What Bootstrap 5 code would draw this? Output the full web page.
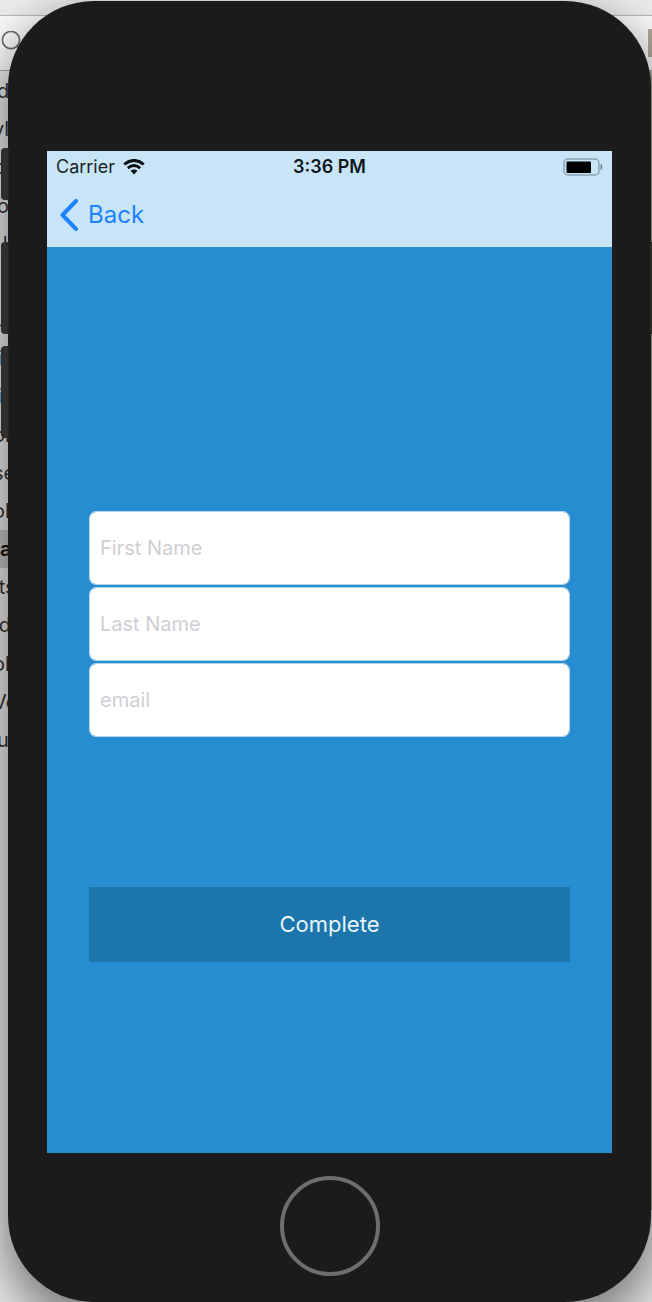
<!DOCTYPE html>
<html lang="en">
<head>
<meta charset="utf-8">
<meta name="viewport" content="width=device-width, initial-scale=1">
<title>Sign up</title>
<link rel="stylesheet" href="https://cdn.jsdelivr.net/npm/bootstrap@5.3.0/dist/css/bootstrap.min.css">
<style>
  body { font-family: Inter, "Liberation Sans", sans-serif; background: #ebebeb; color: #1b1b1b; }
  .stage { min-height: 100vh; padding: 1px 1px 0 8px; }

  /* Desktop window behind the device */
  .desktop { z-index: 0; }
  .tabstrip { height: 16px; background: #ececec; border-bottom: 1px solid #b8b8b8; }
  .searchbar { height: 55px; background: #fafafa; border-bottom: 1px solid #a8a8a8; }
  .thumb { width: 4px; height: 28px; background: #b0a898; }
  .side-list { height: 688px; padding-top: 1px; font-size: 20px; line-height: 1; color: #333; }
  .side-list li { margin-left: -3px; }
  .side-list .scrolled { margin-left: -7px; }
  .side-list .picked { margin-left: 0; background: #c4c4c4; font-weight: 600; color: #111; }
  .rail { top: 71px; bottom: 92px; width: 2px; background: #a5a39c; }

  /* Device body */
  .device { z-index: 1; min-height: calc(100vh - 1px); padding: 150px 39px 26px; border-radius: 86px; background: #1b1b1b; box-shadow: 0 20px 50px 4px rgba(0, 0, 0, .5); }
  .side-key { width: 9px; left: -7px; border-radius: 4px 0 0 4px; background: linear-gradient(90deg, #2e2e2e 70%, #1b1b1b); }
  .key-mute { top: 147px; height: 52px; }
  .key-up { top: 241px; height: 92px; }
  .key-down { top: 345px; height: 92px; }
  .key-power { top: 241px; height: 92px; right: -1px; width: 2px; background: #2b2a26; }

  .app-screen { background: #258dd0; }
  .app-top { height: 96px; background: #c8e5f7; }
  .status-row { height: 31px; padding: 0 9px; font-size: 18px; line-height: 31px; color: #1b2329; }
  .status-row .clock { font-weight: 600; color: #10161a; }
  .back-link { padding: 14px 12px 0; gap: 9px; font-size: 24px; line-height: 38px; color: #1e82ff; }
  .entry-form { padding: 264px 42px 191px; }
  .entry-fields { gap: 2px; margin-bottom: 150px; }
  .entry-fields .form-control { height: 74px; padding: 0 10px; border: 1px solid #b5d6ec; border-radius: 7px; font-size: 20px; color: #222; }
  .entry-fields .form-control::placeholder { color: #cfcfd3; opacity: 1; }
  .btn-complete { height: 75px; border-radius: 0; background: #1c75ab; color: #e8f3fa; font-size: 22px; }
  .btn-complete:hover { background: #19699a; color: #fff; }
  .home-key { width: 100px; height: 100px; margin-top: 23px; border: 4px solid #6e6e6e; border-radius: 50%; background: transparent; }
</style>
</head>
<body>
<div class="stage position-relative overflow-hidden">

  <div class="desktop position-absolute top-0 start-0 w-100 h-100" aria-hidden="true">
    <div class="tabstrip"></div>
    <div class="searchbar d-flex justify-content-between align-items-center">
      <svg width="24" height="24" viewBox="0 0 24 24" fill="none" stroke="#6b6b6b" stroke-width="1.7"><circle cx="11" cy="9" r="8.6"/><path d="M17 15l6 7"/></svg>
      <span class="thumb"></span>
    </div>
    <ul class="side-list list-unstyled d-flex flex-column mb-0">
      <li class="d-flex flex-fill align-items-center">d</li>
      <li class="scrolled d-flex flex-fill align-items-center">vl</li>
      <li class="scrolled d-flex flex-fill align-items-center">p</li>
      <li class="d-flex flex-fill align-items-center">o</li>
      <li class="d-flex flex-fill align-items-center">&nbsp;l</li>
      <li class="d-flex flex-fill align-items-center">&nbsp;</li>
      <li class="scrolled d-flex flex-fill align-items-center">u</li>
      <li class="d-flex flex-fill align-items-center">i</li>
      <li class="d-flex flex-fill align-items-center">i</li>
      <li class="scrolled d-flex flex-fill align-items-center">or</li>
      <li class="scrolled d-flex flex-fill align-items-center">se</li>
      <li class="scrolled d-flex flex-fill align-items-center">ol</li>
      <li class="picked d-flex flex-fill align-items-center">a</li>
      <li class="d-flex flex-fill align-items-center">&#8202;ts</li>
      <li class="d-flex flex-fill align-items-center">&#8202;d</li>
      <li class="scrolled d-flex flex-fill align-items-center">ol</li>
      <li class="scrolled d-flex flex-fill align-items-center">Vo</li>
      <li class="d-flex flex-fill align-items-center">u</li>
    </ul>
    <div class="rail position-absolute end-0"></div>
  </div>

  <main class="device position-relative d-flex flex-column">
    <span class="side-key key-mute position-absolute"></span>
    <span class="side-key key-up position-absolute"></span>
    <span class="side-key key-down position-absolute"></span>
    <span class="key-power position-absolute"></span>

    <div class="app-screen flex-grow-1">
      <header class="app-top">
        <div class="status-row row g-0">
          <div class="col d-flex align-items-center gap-2">
            <span>Carrier</span>
            <svg width="22" height="16" viewBox="0 0 22 16" role="img" aria-label="Wi-Fi"><g fill="none" stroke="#0c1114" stroke-width="2.9"><path d="M1.2 5.3Q11-2.5 20.8 5.3"/><path d="M4.8 9.1Q11 4.1 17.2 9.1"/></g><path d="M7.5 11.8Q11 9 14.5 11.8L11 15.4z" fill="#0c1114"/></svg>
          </div>
          <div class="col-auto clock">3:36 PM</div>
          <div class="col d-flex align-items-center justify-content-end">
            <svg width="40" height="18" viewBox="0 0 40 18" role="img" aria-label="Battery"><rect x="1" y="1" width="35" height="16" rx="4" fill="none" stroke="#8ba3b1" stroke-width="1.5"/><rect x="3.5" y="3.5" width="24.500" height="11.500" rx="1" fill="#000"/><path d="M38 6.500q2 2.500 0 5z" fill="#708693" stroke="#708693"/></svg>
          </div>
        </div>
        <nav class="d-flex">
          <a class="back-link d-flex align-items-center text-decoration-none" href="#">
            <svg width="20" height="32" viewBox="0 0 20 32" fill="none" stroke="#1e82ff" stroke-width="4" aria-hidden="true"><path d="M17 2L3.500 16L17 30" stroke-linecap="round" stroke-linejoin="round"/></svg>
            Back
          </a>
        </nav>
      </header>

      <form class="entry-form">
        <div class="entry-fields d-flex flex-column">
          <div class="position-relative">
            <label class="visually-hidden" for="firstName">First Name</label>
            <input class="form-control" id="firstName" type="text" placeholder="First Name">
          </div>
          <div class="position-relative">
            <label class="visually-hidden" for="lastName">Last Name</label>
            <input class="form-control" id="lastName" type="text" placeholder="Last Name">
          </div>
          <div class="position-relative">
            <label class="visually-hidden" for="email">email</label>
            <input class="form-control" id="email" type="email" placeholder="email">
          </div>
        </div>
        <button class="btn btn-complete w-100 border-0" type="submit">Complete</button>
      </form>
    </div>

    <button class="home-key align-self-center flex-shrink-0" type="button" aria-label="Home"></button>
  </main>
</div>
<script src="https://cdn.jsdelivr.net/npm/bootstrap@5.3.0/dist/js/bootstrap.bundle.min.js"></script>
</body>
</html>
